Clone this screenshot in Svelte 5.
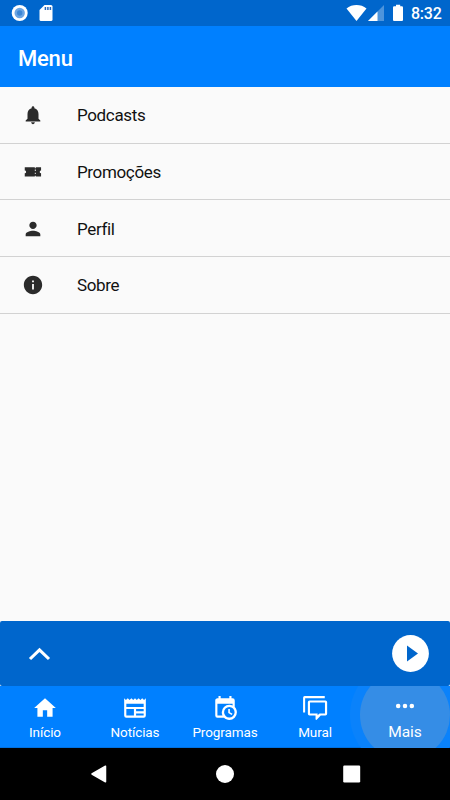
<script lang="ts">
  const menu = [
    { icon: 'bell', label: 'Podcasts' },
    { icon: 'ticket', label: 'Promoções' },
    { icon: 'person', label: 'Perfil' },
    { icon: 'info', label: 'Sobre' },
  ];

  const tabs = [
    { icon: 'home', label: 'Início' },
    { icon: 'news', label: 'Notícias' },
    { icon: 'calendar', label: 'Programas' },
    { icon: 'chat', label: 'Mural' },
    { icon: 'more', label: 'Mais' },
  ];

  let active = $state('more');

  const paths: Record<string, string> = {
    bell: 'M12 22c1.1 0 2-.9 2-2h-4c0 1.1.89 2 2 2zm6-6v-5c0-3.07-1.64-5.64-4.5-6.32V4c0-.83-.67-1.5-1.5-1.5s-1.5.67-1.5 1.5v.68C7.63 5.36 6 7.92 6 11v5l-2 2v1h16v-1l-2-2z',
    ticket:
      'M3 6.8h11v1h1v-1h5.8v3.6a1.5 1.5 0 0 0 0 3v3.6H15v-1h-1v1H3v-3.6a1.5 1.5 0 0 0 0-3zm11 2.6v1.5h1V9.4zm0 3.4v1.5h1v-1.5z',
    person: 'M12 12c2.21 0 4-1.79 4-4s-1.79-4-4-4-4 1.79-4 4 1.79 4 4 4zm0 2c-2.67 0-8 1.34-8 4v2h16v-2c0-2.66-5.33-4-8-4z',
    info: 'M12 2C6.48 2 2 6.48 2 12s4.48 10 10 10 10-4.48 10-10S17.52 2 12 2zm1 15h-2v-6h2v6zm0-8h-2V7h2v2z',
    home: 'M10 20v-6h4v6h5v-8h3L12 3 2 12h3v8z',
    news: 'M20 11H4V8h16m0 7h-7v-2h7m0 6h-7v-2h7m-9 2H4v-6h7m9.33-8.33L18.67 3 17 4.67 15.33 3l-1.66 1.67L12 3l-1.67 1.67L8.67 3 7 4.67 5.33 3 3.67 4.67 2 3v16a2 2 0 0 0 2 2h16a2 2 0 0 0 2-2V3z',
    calendar:
      'M15 13h1.5v2.82l2.44 1.41-.75 1.3L15 16.69V13m4-5H5v11h4.67C9.24 18.09 9 17.07 9 16a7 7 0 0 1 7-7c1.07 0 2.09.24 3 .67V8M5 21a2 2 0 0 1-2-2V5c0-1.11.89-2 2-2h1V1h2v2h8V1h2v2h1a2 2 0 0 1 2 2v6.1c1.24 1.26 2 2.99 2 4.9a7 7 0 0 1-7 7c-1.91 0-3.64-.76-4.9-2H5m11-9.85A4.85 4.85 0 0 0 11.15 16 4.85 4.85 0 0 0 16 20.85 4.85 4.85 0 0 0 20.85 16 4.85 4.85 0 0 0 16 11.15z',
    chat: 'M2.5 1H21v1.9H2.9v13.3H1V2.5A1.5 1.5 0 0 1 2.5 1zM7 5h14.6a1.6 1.6 0 0 1 1.6 1.6v10.8a1.6 1.6 0 0 1-1.6 1.6h-4.3l-3.5 3.7c-.5.5-1.3.3-1.3-.5V19H7a1.6 1.6 0 0 1-1.6-1.6V6.6A1.6 1.6 0 0 1 7 5zm.4 1.9v10.2h7v1.7l1.8-1.7h5V6.9z',
    more: 'M5.7 9.9a2.1 2.1 0 1 0 0 4.2 2.1 2.1 0 0 0 0-4.2zm6.3 0a2.1 2.1 0 1 0 0 4.2 2.1 2.1 0 0 0 0-4.2zm6.3 0a2.1 2.1 0 1 0 0 4.2 2.1 2.1 0 0 0 0-4.2z',
  };
</script>

<div class="screen">
  <div class="status">
    <svg width="60" height="26" viewBox="0 0 60 26" aria-hidden="true">
      <circle cx="19.7" cy="13" r="8" fill="#fff" />
      <circle cx="19.7" cy="13" r="5.2" fill="#6ba5e3" />
      <circle cx="19.7" cy="13" r="2.7" fill="#3c86d5" />
      <path d="M44.5 5H51a1.5 1.5 0 0 1 1.5 1.5v13A1.5 1.5 0 0 1 51 21H41a1.5 1.5 0 0 1-1.5-1.5V10z" fill="#fff" />
      <path d="M45.4 7v3M47.9 7v3M50.4 7v3" stroke="#2468bd" stroke-width="1.5" />
    </svg>
    <svg class="right" width="60" height="26" viewBox="345 0 60 26" aria-hidden="true">
      <path d="M346.5 8.5C352 3.9 361 3.9 366.5 8.5L356.5 21z" fill="#fff" />
      <path d="M384 5v16h-16z" fill="#4d94dc" />
      <path d="M377.5 11.5V21H368z" fill="#fff" />
      <path d="M396 4.7h4.2v1.6h1.7a1.1 1.1 0 0 1 1.1 1.1v12.5a1.1 1.1 0 0 1-1.1 1.1h-7.8a1.1 1.1 0 0 1-1.1-1.1V7.4a1.1 1.1 0 0 1 1.1-1.1h1.9z" fill="#fff" />
    </svg>
    <span class="clock">8:32</span>
  </div>

  <header>Menu</header>

  <ul class="menu">
    {#each menu as item}
      <li>
        <svg class="icon" viewBox="0 0 24 24" aria-hidden="true"><path d={paths[item.icon]} /></svg>
        <span>{item.label}</span>
      </li>
    {/each}
  </ul>

  <div class="player">
    <svg width="25" height="24" viewBox="0 0 25 24" aria-hidden="true">
      <path d="M3 17l9.5-9.2L22 17" fill="none" stroke="#fff" stroke-width="3.1" />
    </svg>
    <svg width="37" height="37" viewBox="0 0 37 37" aria-hidden="true">
      <circle cx="18.5" cy="18.5" r="18.4" fill="#fff" />
      <path d="M15 10.5v16l11-8z" fill="#0066cc" />
    </svg>
  </div>

  <nav class="tabs">
    {#each tabs as tab}
      <button class:active={active === tab.icon} onclick={() => (active = tab.icon)}>
        <svg viewBox="0 0 24 24" aria-hidden="true"><path d={paths[tab.icon]} /></svg>
        <span>{tab.label}</span>
      </button>
    {/each}
  </nav>

  <div class="system">
    <svg width="20" height="20" viewBox="0 0 20 20" aria-hidden="true">
      <path d="M4 10L17.500 2.200v15.600z" stroke="#fff" stroke-width="1.5" stroke-linejoin="round" />
    </svg>
    <svg width="20" height="20" viewBox="0 0 20 20" aria-hidden="true"><circle cx="10" cy="10" r="9" /></svg>
    <svg width="20" height="20" viewBox="0 0 20 20" aria-hidden="true"><rect x="2.200" y="1.500" width="17" height="17" rx="1.200" /></svg>
  </div>
</div>

<style>
  :global(body) {
    margin: 0;
  }
  .screen {
    display: flex;
    flex-direction: column;
    width: 450px;
    height: 800px;
    overflow: hidden;
    background: #fafafa;
    font-family: Roboto, sans-serif;
  }
  svg {
    display: block;
    flex: none;
  }
  .status {
    display: flex;
    align-items: center;
    height: 26px;
    flex: none;
    background: #0066cc;
    color: #fff;
  }
  .right {
    margin-left: auto;
  }
  .clock {
    width: 39px;
    padding: 2px 0 0 6px;
    font-size: 16px;
    font-weight: 500;
    letter-spacing: -0.25px;
    line-height: 24px;
  }
  header {
    height: 61px;
    flex: none;
    box-sizing: border-box;
    padding: 3px 0 0 18px;
    background: #0080ff;
    color: #fff;
    font-size: 22px;
    font-weight: 500;
    letter-spacing: -0.2px;
    line-height: 60px;
  }
  .menu {
    flex: 1;
    margin: 0;
    padding: 0;
    list-style: none;
  }
  .menu li {
    display: flex;
    align-items: center;
    gap: 33px;
    height: 56.7px;
    box-sizing: border-box;
    padding: 1px 0 0 22px;
    border-bottom: 1px solid #d2d2d2;
    color: #111;
    font-size: 17px;
    letter-spacing: -0.35px;
  }
  .icon {
    width: 22px;
    height: 22px;
    fill: #2b2b2b;
  }
  .player {
    display: flex;
    align-items: center;
    justify-content: space-between;
    height: 65px;
    flex: none;
    box-sizing: border-box;
    padding: 0 21px 0 27px;
    border-radius: 2px;
    background: #0066cc;
  }
  .tabs {
    display: grid;
    grid-template-columns: repeat(5, 1fr);
    height: 62px;
    flex: none;
    background: #0080ff;
    overflow: hidden;
    box-shadow: inset 0 -1px #0070df;
  }
  .tabs button {
    position: relative;
    display: flex;
    flex-direction: column;
    align-items: center;
    gap: 2px;
    min-width: 0;
    margin: 0;
    padding: 9px 0 0;
    border: 0;
    background: none;
    color: #fff;
    font: 13.5px/18px Roboto, sans-serif;
    letter-spacing: -0.1px;
  }
  .tabs svg {
    width: 26px;
    height: 26px;
    fill: #fff;
  }
  .tabs .active {
    gap: 4px;
    padding-top: 7px;
    font-size: 15.5px;
  }
  /* touch ripple, with its fainter outer ring */
  .tabs .active::before {
    content: '';
    position: absolute;
    top: -16px;
    left: 0;
    width: 90px;
    height: 90px;
    border-radius: 50%;
    background: #358de6;
    box-shadow: 0 0 0 10px #0a82fb;
  }
  .tabs .active svg,
  .tabs .active span {
    position: relative;
  }
  .system {
    display: flex;
    align-items: center;
    justify-content: space-between;
    height: 52px;
    flex: none;
    box-sizing: border-box;
    padding: 0 89px 0 88px;
    background: #000;
    fill: #fff;
  }
</style>
